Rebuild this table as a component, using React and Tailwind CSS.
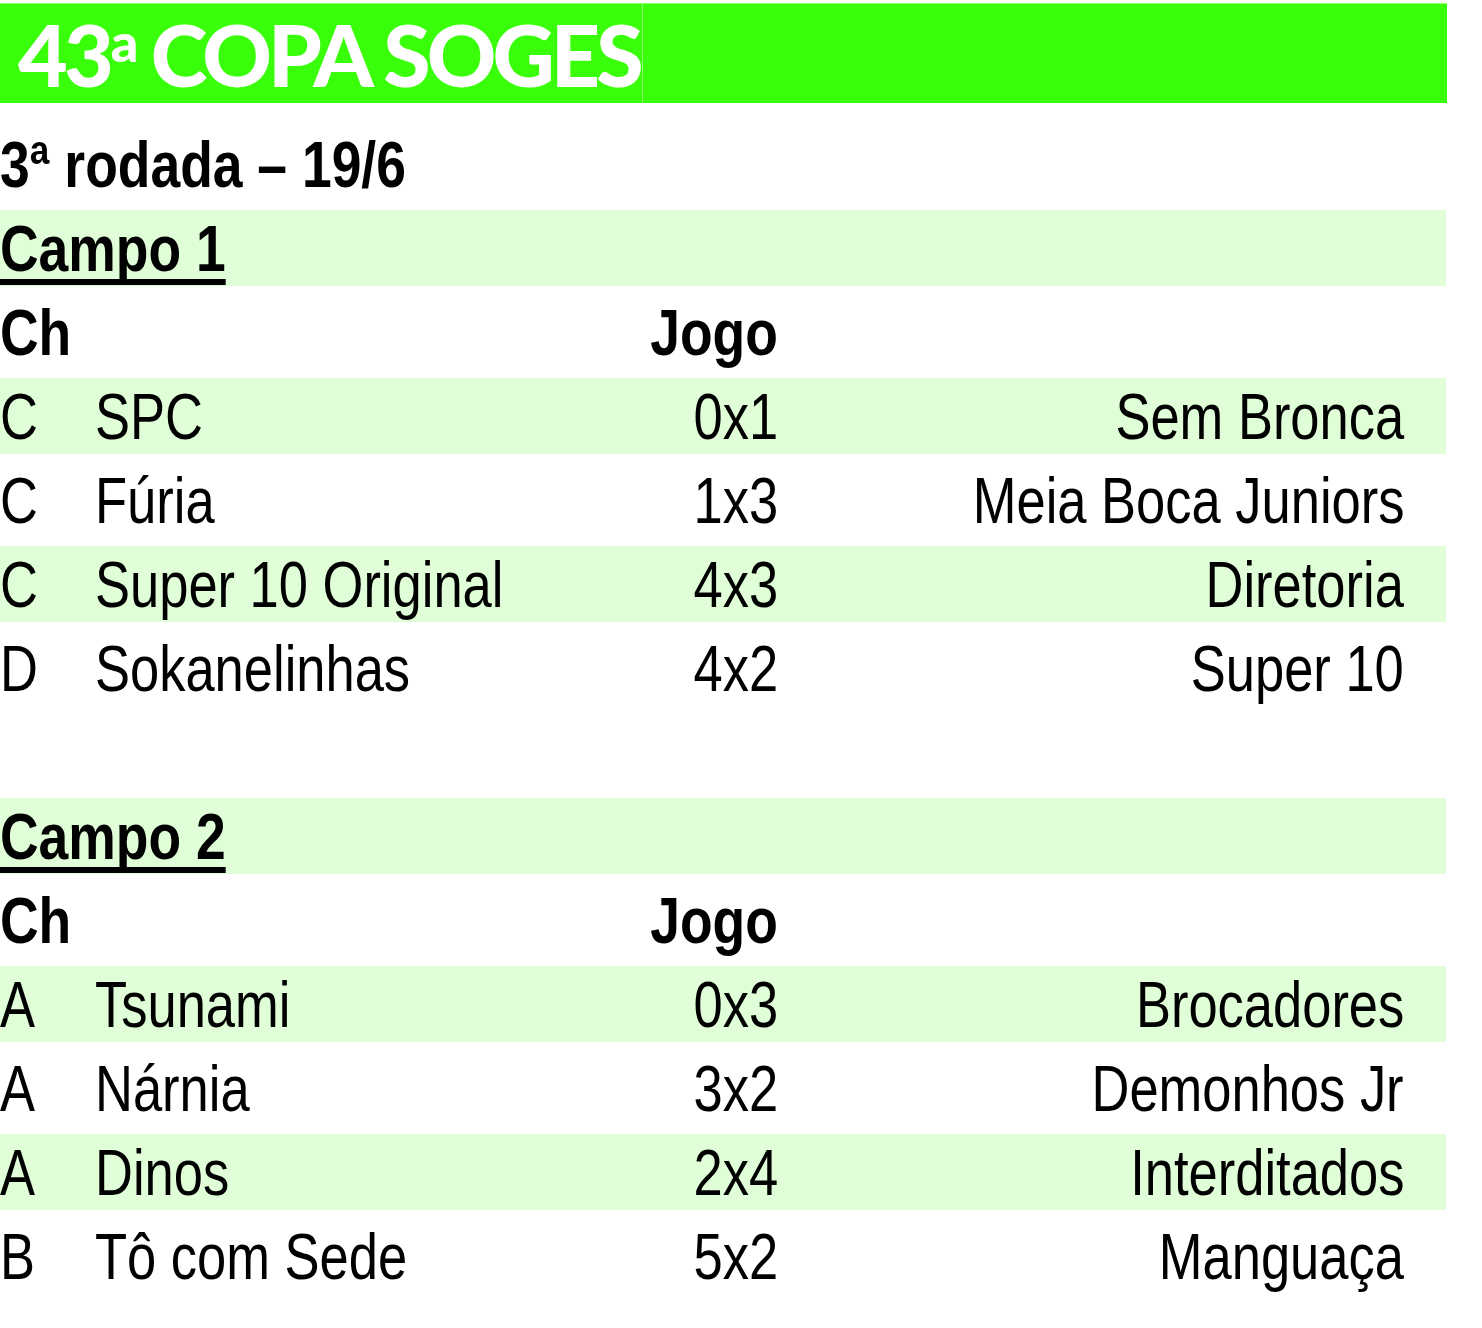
import React from 'react';

const campo1 = [
  { ch: 'C', home: 'SPC', score: '0x1', away: 'Sem Bronca' },
  { ch: 'C', home: 'Fúria', score: '1x3', away: 'Meia Boca Juniors' },
  { ch: 'C', home: 'Super 10 Original', score: '4x3', away: 'Diretoria' },
  { ch: 'D', home: 'Sokanelinhas', score: '4x2', away: 'Super 10' },
];

const campo2 = [
  { ch: 'A', home: 'Tsunami', score: '0x3', away: 'Brocadores' },
  { ch: 'A', home: 'Nárnia', score: '3x2', away: 'Demonhos Jr' },
  { ch: 'A', home: 'Dinos', score: '2x4', away: 'Interditados' },
  { ch: 'B', home: 'Tô com Sede', score: '5x2', away: 'Manguaça' },
];

// narrow face isn't installed, so squeeze Liberation Sans to Arial Narrow widths
const Narrow = ({ right, className = '', children }) => (
  <span className={`inline-block whitespace-nowrap scale-x-[0.82] ${right ? 'origin-right' : 'origin-left'} ${className}`}>
    {children}
  </span>
);

const Bold = ({ right, className = '', children }) => (
  <span className={`inline-block whitespace-nowrap font-bold scale-x-[0.835] ${right ? 'origin-right' : 'origin-left'} ${className}`}>
    {children}
  </span>
);

const Row = ({ shaded, children }) => (
  <div className="h-[84px]">
    <div className={`flex h-[76px] w-[1446px] pt-[3px] leading-[73px] ${shaded ? 'bg-[#e0ffd8]' : ''}`}>
      {children}
    </div>
  </div>
);

const Campo = ({ title, games }) => (
  <>
    <Row shaded>
      <Bold className="underline decoration-[6px] underline-offset-[8px] [text-decoration-skip-ink:none]">{title}</Bold>
    </Row>
    <Row>
      <span className="w-[500px]">
        <Bold>Ch</Bold>
      </span>
      <span className="w-[278px] text-right">
        <Bold right>Jogo</Bold>
      </span>
    </Row>
    {games.map((g, i) => (
      <Row key={g.home} shaded={i % 2 === 0}>
        <span className="w-[95px]">
          <Narrow>{g.ch}</Narrow>
        </span>
        <span className="w-[560px]">
          <Narrow>{g.home}</Narrow>
        </span>
        <span className="w-[123px] text-right">
          <Narrow right>{g.score}</Narrow>
        </span>
        <span className="w-[626px] text-right">
          <Narrow right>{g.away}</Narrow>
        </span>
      </Row>
    ))}
  </>
);

export default function App() {
  return (
    <div className="min-h-[1328px] w-[1482px] bg-white pt-[3px] font-['Liberation_Sans',sans-serif] text-[64px] text-black">
      <div className="flex h-[100px] w-[1447px] border-t border-[#8cff6e] bg-[#39ff0a]">
        <div className="flex w-[643px] items-center border-r border-[#8cff6e]">
          <span className="pl-[18px] font-['Lato',sans-serif] text-[86px] font-black leading-none tracking-[-4px] text-white">
            43<span className="relative -top-[25px] ml-[1px] text-[54px]">a</span> COPA SOGES
          </span>
        </div>
      </div>
      <div className="h-[23px]" />
      <Row>
        <Bold>3ª rodada – 19/6</Bold>
      </Row>
      <Campo title="Campo 1" games={campo1} />
      <div className="h-[84px]" />
      <Campo title="Campo 2" games={campo2} />
    </div>
  );
}
